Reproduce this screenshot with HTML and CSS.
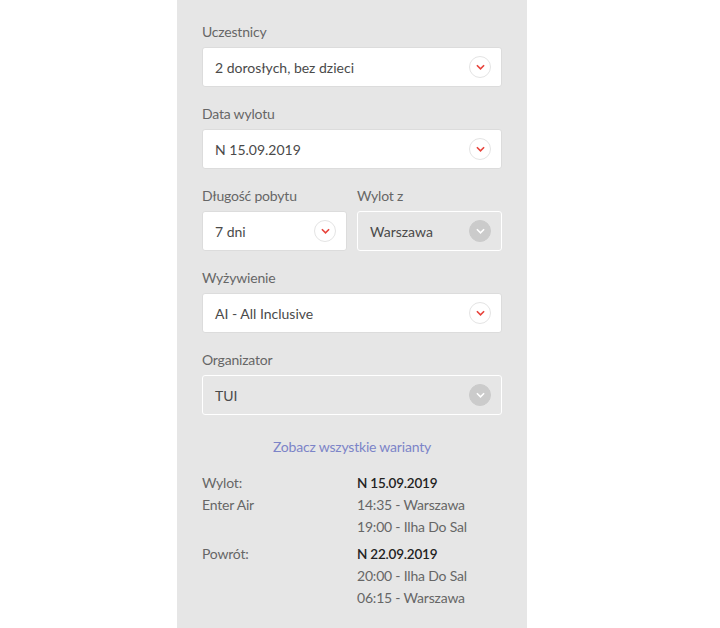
FILE: index.html
```html
<!DOCTYPE html>
<html lang="pl">
<head>
<meta charset="utf-8">
<link rel="stylesheet" href="styles.css">
</head>
<body>
<div class="panel">
  <div class="field">
    <div class="label">Uczestnicy</div>
    <div class="select"><span>2 dorosłych, bez dzieci</span><span class="icon"><svg viewBox="0 0 10 6" width="9" height="6"><path d="M1 1l4 4 4-4" fill="none" stroke="#e8433b" stroke-width="1.8"/></svg></span></div>
  </div>
  <div class="field">
    <div class="label">Data wylotu</div>
    <div class="select"><span>N 15.09.2019</span><span class="icon"><svg viewBox="0 0 10 6" width="9" height="6"><path d="M1 1l4 4 4-4" fill="none" stroke="#e8433b" stroke-width="1.8"/></svg></span></div>
  </div>
  <div class="row">
    <div class="field">
      <div class="label">Długość pobytu</div>
      <div class="select"><span>7 dni</span><span class="icon"><svg viewBox="0 0 10 6" width="9" height="6"><path d="M1 1l4 4 4-4" fill="none" stroke="#e8433b" stroke-width="1.8"/></svg></span></div>
    </div>
    <div class="field">
      <div class="label">Wylot z</div>
      <div class="select disabled"><span>Warszawa</span><span class="icon"><svg viewBox="0 0 10 6" width="9" height="6"><path d="M1 1l4 4 4-4" fill="none" stroke="#fff" stroke-width="1.8"/></svg></span></div>
    </div>
  </div>
  <div class="field">
    <div class="label">Wyżywienie</div>
    <div class="select"><span>AI - All Inclusive</span><span class="icon"><svg viewBox="0 0 10 6" width="9" height="6"><path d="M1 1l4 4 4-4" fill="none" stroke="#e8433b" stroke-width="1.8"/></svg></span></div>
  </div>
  <div class="field">
    <div class="label">Organizator</div>
    <div class="select disabled"><span>TUI</span><span class="icon"><svg viewBox="0 0 10 6" width="9" height="6"><path d="M1 1l4 4 4-4" fill="none" stroke="#fff" stroke-width="1.8"/></svg></span></div>
  </div>
  <div class="link">Zobacz wszystkie warianty</div>
  <div class="flight">
    <div class="col"><div>Wylot:</div><div>Enter Air</div></div>
    <div class="col"><div class="date">N 15.09.2019</div><div>14:35 - Warszawa</div><div>19:00 - Ilha Do Sal</div></div>
  </div>
  <div class="flight">
    <div class="col"><div>Powrót:</div></div>
    <div class="col"><div class="date">N 22.09.2019</div><div>20:00 - Ilha Do Sal</div><div>06:15 - Warszawa</div></div>
  </div>
</div>
</body>
</html>
```
FILE: styles.css
```css
html, body {
  margin: 0;
  padding: 0;
  background: #fff;
}
body {
  font-family: "Source Sans Pro", Lato, "Open Sans", sans-serif;
  color: #555;
}
.panel {
  width: 300px;
  margin-left: 177px;
  background: #e6e6e6;
  padding: 22px 25px 30px;
  min-height: 576px;
}
.field {
  margin-bottom: 17px;
}
.label {
  font-size: 14px;
  line-height: 20px;
  color: #666;
  margin-bottom: 5px;
  letter-spacing: -0.2px;
}
.select {
  height: 38px;
  box-sizing: content-box;
  border: 1px solid #dcdcdc;
  border-radius: 3px;
  background: #fff;
  display: flex;
  align-items: center;
  justify-content: space-between;
  padding: 0 10px 0 12px;
  font-size: 14px;
  color: #4a4a4a;
}
.select.disabled {
  background: #e6e6e6;
  border-color: #fff;
}
.icon {
  width: 22px;
  height: 22px;
  border-radius: 50%;
  border: 1px solid #e4e4e4;
  box-sizing: border-box;
  display: flex;
  align-items: center;
  justify-content: center;
  background: #fff;
}
.disabled .icon {
  background: #cbcbcb;
  border-color: #cbcbcb;
}
.row {
  display: grid;
  grid-template-columns: 1fr 1fr;
  column-gap: 10px;
}
.row .field {
  margin-bottom: 17px;
}
.link {
  text-align: center;
  color: #7c84c8;
  font-size: 14px;
  line-height: 20px;
  margin-top: 22px;
  margin-bottom: 15px;
  letter-spacing: -0.2px;
}
.flight {
  display: grid;
  grid-template-columns: 155px 1fr;
  font-size: 14px;
  line-height: 22px;
  color: #666;
  margin-bottom: 5px;
  letter-spacing: -0.2px;
}
.date {
  color: #222;
  font-weight: 600;
  font-size: 13.5px;
}
```
